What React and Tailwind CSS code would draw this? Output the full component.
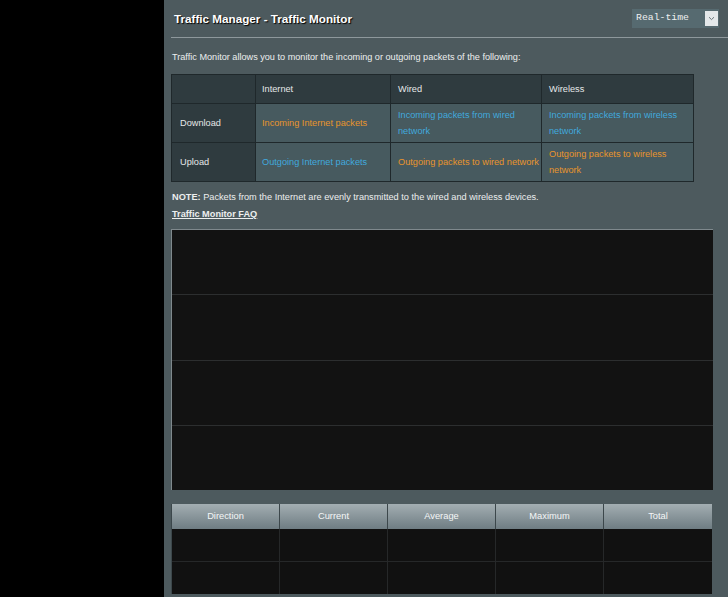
import React from "react";

const O = "text-[#e8952c]";
const B = "text-[#41a9dd]";

function StatsHeader({ children, last }) {
  return (
    <div
      className={
        "flex items-center justify-center h-[25px] bg-gradient-to-b from-[#a3aeb2] to-[#6f7d83] text-[#f4f6f7] text-[9.3px] " +
        (last ? "" : "border-r border-[#3c474b]")
      }
    >
      {children}
    </div>
  );
}

export default function App() {
  const heads = ["Direction", "Current", "Average", "Maximum", "Total"];
  return (
    <div className="flex w-[728px] h-[597px] overflow-hidden bg-black font-['Liberation_Sans',Arial,sans-serif]">
      <div className="w-[164px] shrink-0 bg-black" />
      <div className="flex-1 bg-[#4d5a5e] pl-[7px] pr-[9px]">
        {/* header */}
        <div className="flex items-center justify-between h-[37px]">
          <div className="pl-[3px] text-[11.7px] font-bold text-white [text-shadow:1px_1px_1px_#000]">
            Traffic Manager - Traffic Monitor
          </div>
          <div className="flex h-[19px] w-[87px] bg-[#566a70]">
            <div className="flex-1 flex items-center pl-[4px] font-['Liberation_Mono',monospace] text-[9.8px] text-[#eef0f0]">
              Real-time
            </div>
            <div className="w-[13px] my-[2px] mr-[1px] bg-[#e4e8ea] flex items-center justify-center">
              <svg width="7" height="5" viewBox="0 0 7 5">
                <path d="M1 1.2 L3.5 3.6 L6 1.2" stroke="#6a767a" strokeWidth="1" fill="none" />
              </svg>
            </div>
          </div>
        </div>
        <div className="h-px bg-[#8e989c] -mr-[9px]" />

        <div className="mt-[11px] leading-[16px] text-[9.15px] text-[#eceeee] pl-[1px]">
          Traffic Monitor allows you to monitor the incoming or outgoing packets of the following:
        </div>

        {/* info table */}
        <div className="mt-[9px] w-[523px] grid grid-cols-[83px_134px_150px_151px] grid-rows-[28px_38px_38px] border border-[#1f282b] bg-[#1f282b] gap-px text-[9.2px] leading-[16px]">
          <div className="bg-[#2f3b3f]" />
          <div className="bg-[#2f3b3f] flex items-center pl-[6px] text-[#e6e8e8]">Internet</div>
          <div className="bg-[#2f3b3f] flex items-center pl-[7px] text-[#e6e8e8]">Wired</div>
          <div className="bg-[#2f3b3f] flex items-center pl-[7px] text-[#e6e8e8]">Wireless</div>

          <div className="bg-[#2f3b3f] flex items-center pl-[8px] text-[#e6e8e8]">Download</div>
          <div className={"bg-[#475a5f] flex items-center pl-[6px] " + O}>Incoming Internet packets</div>
          <div className={"bg-[#475a5f] flex items-center pl-[7px] pr-[4px] " + B}>Incoming packets from wired network</div>
          <div className={"bg-[#475a5f] flex items-center pl-[7px] pr-[4px] " + B}>Incoming packets from wireless network</div>

          <div className="bg-[#2f3b3f] flex items-center pl-[8px] text-[#e6e8e8]">Upload</div>
          <div className={"bg-[#475a5f] flex items-center pl-[6px] " + B}>Outgoing Internet packets</div>
          <div className={"bg-[#475a5f] flex items-center pl-[7px] " + O}>Outgoing packets to wired network</div>
          <div className={"bg-[#475a5f] flex items-center pl-[7px] pr-[4px] " + O}>Outgoing packets to wireless network</div>
        </div>

        <div className="mt-[7px] leading-[16px] text-[9.2px] text-[#eceeee] pl-[1px]">
          <span className="font-bold">NOTE:</span> Packets from the Internet are evenly transmitted to the wired and wireless devices.
        </div>
        <div className="mt-[1px] leading-[16px] text-[9.2px] font-bold text-[#eceeee] underline pl-[1px]">
          Traffic Monitor FAQ
        </div>

        {/* graph */}
        <div className="mt-[7px] w-[542px] h-[261px] bg-[#121212] border-l border-t border-[#7f898d] flex flex-col">
          <div className="flex-1 border-b border-[#2c2e2f]" />
          <div className="flex-1 border-b border-[#2c2e2f]" />
          <div className="flex-1 border-b border-[#2c2e2f]" />
          <div className="flex-1" />
        </div>

        {/* stats table */}
        <div className="mt-[14px] w-[541px] grid grid-cols-5 border-l border-[#3c474b]">
          {heads.map((h, i) => (
            <StatsHeader key={h} last={i === 4}>{h}</StatsHeader>
          ))}
          {[0, 1, 2, 3, 4].map((i) => (
            <div key={"a" + i} className={"h-[33px] bg-[#111111] border-b border-[#262829] " + (i < 4 ? "border-r border-r-[#262829]" : "")} />
          ))}
          {[0, 1, 2, 3, 4].map((i) => (
            <div key={"b" + i} className={"h-[32px] bg-[#111111] " + (i < 4 ? "border-r border-[#262829]" : "")} />
          ))}
        </div>
      </div>
    </div>
  );
}
